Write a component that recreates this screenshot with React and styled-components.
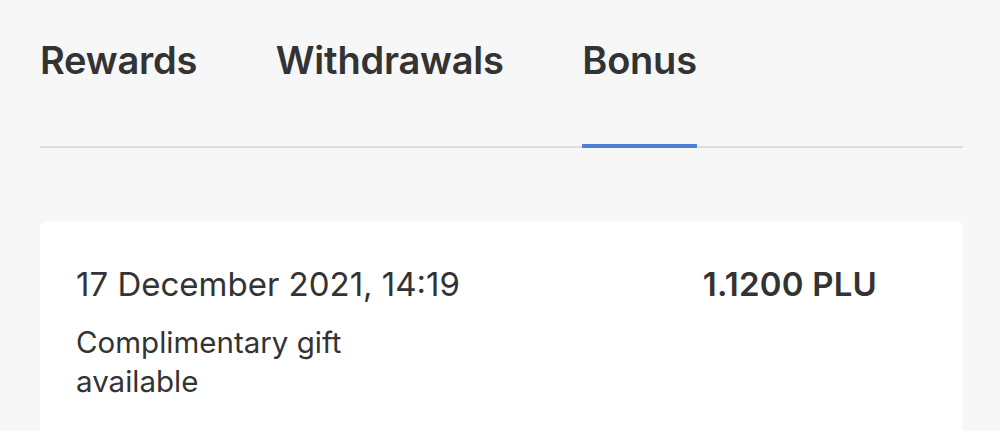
import React from "react";
import styled, { createGlobalStyle } from "styled-components";

const Global = createGlobalStyle`
  html, body { margin: 0; padding: 0; background: #f7f7f7; }
  body { font-family: Inter, "Noto Sans", sans-serif; color: #333333; }
`;

const Page = styled.div`
  padding: 0 37px 0 40px;
`;

const Tabs = styled.div`
  display: flex;
  gap: 78.5px;
  border-bottom: 2px solid #dddddd;
  padding-top: 36px;
`;

const Tab = styled.div`
  position: relative;
  font-size: 38px;
  font-weight: 600;
  line-height: 48px;
  letter-spacing: -0.2px;
  color: #333333;
  padding-bottom: 62px;
  &::after {
    content: "";
    display: ${(p) => (p.$active ? "block" : "none")};
    position: absolute;
    left: 0;
    right: 0;
    bottom: -2px;
    height: 4px;
    background: #4f7fd2;
  }
`;

const Card = styled.div`
  margin-top: 73px;
  background: #ffffff;
  border-radius: 8px;
  padding: 43px 86px 40px 36px;
  display: flex;
  justify-content: space-between;
  align-items: flex-start;
  min-height: 300px;
`;

const Info = styled.div`
  display: flex;
  flex-direction: column;
  gap: 19px;
`;

const DateText = styled.div`
  font-size: 33px;
  line-height: 40px;
  font-weight: 400;
`;

const Desc = styled.div`
  font-size: 29.5px;
  line-height: 39px;
  max-width: 320px;
`;

const Amount = styled.div`
  font-size: 33px;
  line-height: 40px;
  font-weight: 600;
  letter-spacing: 0.2px;
`;

export default function App() {
  return (
    <>
      <Global />
      <Page>
        <Tabs>
          <Tab>Rewards</Tab>
          <Tab>Withdrawals</Tab>
          <Tab $active>Bonus</Tab>
        </Tabs>
        <Card>
          <Info>
            <DateText>17 December 2021, 14:19</DateText>
            <Desc>Complimentary gift available</Desc>
          </Info>
          <Amount>1.1200 PLU</Amount>
        </Card>
      </Page>
    </>
  );
}
